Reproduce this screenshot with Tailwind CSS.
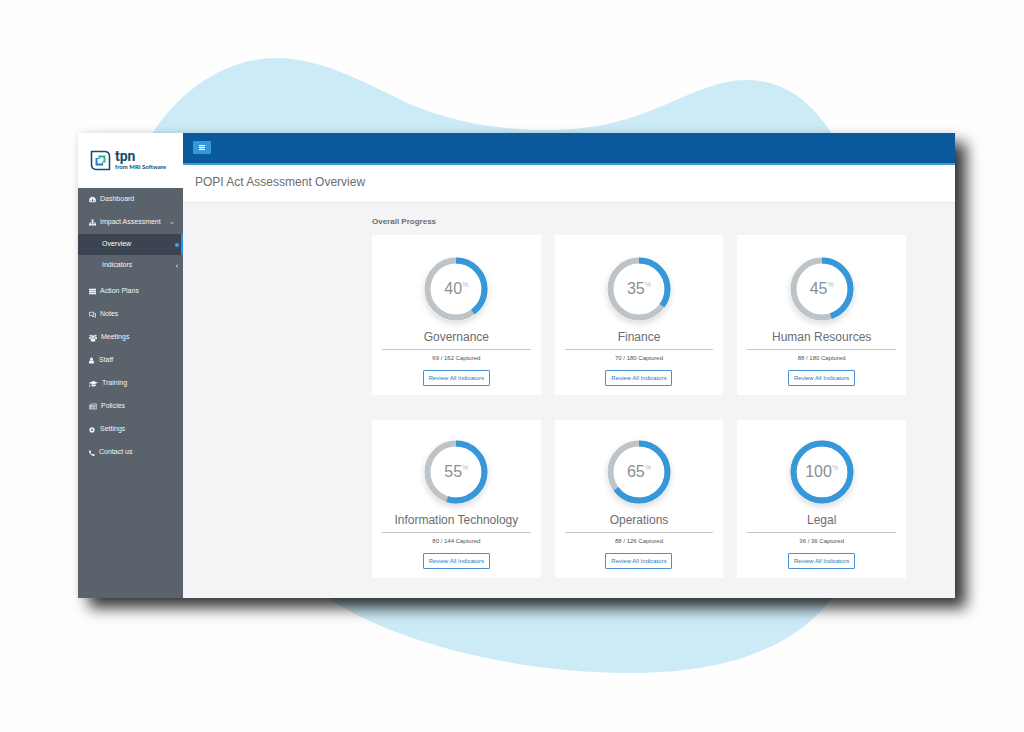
<!DOCTYPE html>
<html lang="en">
<head>
<meta charset="utf-8">
<meta name="viewport" content="width=device-width, initial-scale=1">
<title>POPI Act Assessment Overview</title>
<script src="https://cdn.jsdelivr.net/npm/@tailwindcss/browser@4"></script>
</head>
<body class="relative min-h-screen bg-[#fefefe] pt-[133px] pr-[69px] pb-[134px] pl-[78px] font-['Liberation_Sans',Arial,sans-serif] text-[#6a6d71]">

<!-- Decorative blob behind the window -->
<svg class="absolute inset-0 h-full w-full" viewBox="0 0 1024 732" preserveAspectRatio="none" aria-hidden="true">
  <path fill="#cdebf7" d="M151 135C180 90 225 58 276 58C325 58 370 86 410 104C455 123 500 130 550 130C650 130 690 80 747 80C790 80 815 108 833 135L860 560C855 580 845 590 831 599C800 640 740 673 630 673C500 673 380 635 327 597L200 500Z"/>
</svg>

<div class="relative flex bg-[#f4f4f6] shadow-[11px_10px_14px_rgba(0,0,0,0.78),0_0_8px_rgba(0,0,0,0.08)]">

  <aside class="flex w-[105px] shrink-0 flex-col bg-[#5a626c]">
    <a href="#" class="flex h-[55px] items-center gap-[4px] bg-white pl-[12px] text-[#12506b]" aria-label="tpn from MRI Software">
      <svg class="h-[21px] w-[21px] shrink-0" viewBox="0 0 21 21" fill="none" aria-hidden="true">
        <path d="M1.500 1.500H14.500Q19.500 1.500 19.500 6.500V19.500H6.500Q1.500 19.500 1.500 14.500Z" stroke="#14506a" stroke-width="1.600" stroke-linejoin="round"/>
        <path d="M9 6.500H14.500V12" stroke="#1fb58c" stroke-width="1.900"/>
        <path d="M6.500 8.500V14.500H12.500" stroke="#1c7fd0" stroke-width="1.900"/>
        <path d="M9 5.600V9M12 12H15.400" stroke="#1fb58c" stroke-width="1.200"/>
        <path d="M5.600 8.500H8.500M12.500 15.400V12.800" stroke="#1c7fd0" stroke-width="1.200"/>
      </svg>
      <span class="flex flex-col">
        <span class="font-[Roboto,sans-serif] text-[14px] leading-[11px] font-bold">tpn</span>
        <span class="font-[Lato,sans-serif] text-[6px] leading-[9px] font-bold whitespace-nowrap">from MRI Software</span>
      </span>
    </a>

    <nav class="text-[7px] text-[#f4f5f6]" aria-label="Main">
      <ul>
        <li><a href="#" class="flex h-[23px] items-center gap-[4px] pl-[11px]">
          <svg class="h-[7px] w-[7px]" viewBox="0 0 14 14" fill="currentColor" aria-hidden="true"><path fill-rule="evenodd" d="M7 1.500A7 7 0 0 0 1.500 12.500H12.500A7 7 0 0 0 7 1.500ZM6.300 5H7.700V8.500A1.500 1.500 0 1 1 6.300 8.500ZM2 8H3.500V9.500H2ZM10.500 8H12V9.500H10.500Z"/></svg>
          Dashboard</a></li>
        <li><a href="#" class="flex h-[23px] items-center gap-[4px] pr-[9px] pl-[11px]">
          <svg class="h-[7px] w-[7px]" viewBox="0 0 14 14" fill="currentColor" aria-hidden="true"><path d="M5 1H9V5H7.700V6.500H12.500V9H14V13H9.500V9H11.300V7.700H7.700V9H9V13H5V9H6.300V7.700H2.700V9H4.500V13H0V9H1.500V6.500H6.300V5H5Z"/></svg>
          <span class="flex-1 whitespace-nowrap">Impact Assessment</span>
          <svg class="h-[4px] w-[4px]" viewBox="0 0 8 8" fill="none" stroke="currentColor" stroke-width="1.600" aria-hidden="true"><path d="M1 2.500L4 5.500L7 2.500"/></svg>
        </a>
          <ul class="mb-[4px]">
            <li><a href="#" aria-current="page" class="flex h-[21px] items-center justify-between border-r-2 border-[#2f8fdc] bg-[#3c4452] pr-[2px] pl-[24px] text-white">Overview
              <svg class="h-[4px] w-[4px]" viewBox="0 0 4 4" fill="#3ba3ec" aria-hidden="true"><circle cx="2" cy="2" r="2"/></svg></a></li>
            <li><a href="#" class="flex h-[21px] items-center justify-between pr-[4px] pl-[24px]">Indicators
              <svg class="h-[4px] w-[4px]" viewBox="0 0 8 8" fill="none" stroke="currentColor" stroke-width="1.600" aria-hidden="true"><path d="M5.500 1L2.500 4L5.500 7"/></svg></a></li>
          </ul>
        </li>
        <li><a href="#" class="flex h-[23px] items-center gap-[4px] pl-[11px]">
          <svg class="h-[7px] w-[7px]" viewBox="0 0 14 14" fill="currentColor" aria-hidden="true"><path d="M0 1.500H14V4.500H0ZM0 5.500H14V8.500H0ZM0 9.500H14V12.500H0Z"/></svg>
          Action Plans</a></li>
        <li><a href="#" class="flex h-[23px] items-center gap-[4px] pl-[11px]">
          <svg class="h-[7px] w-[7px]" viewBox="0 0 14 14" fill="none" stroke="currentColor" stroke-width="1.500" aria-hidden="true"><path d="M1 2.500H9.500V8.500H4L2 10.500V8.500H1ZM11 5H13V11H12.500V13L10.500 11H6"/></svg>
          Notes</a></li>
        <li><a href="#" class="flex h-[23px] items-center gap-[4px] pl-[11px]">
          <svg class="h-[8px] w-[8px]" viewBox="0 0 16 16" fill="currentColor" aria-hidden="true"><circle cx="3" cy="3.500" r="2.200"/><circle cx="13" cy="3.500" r="2.200"/><circle cx="8" cy="5.500" r="2.900"/><path d="M0 6.500H4.500Q4.500 8.500 6 9H3.500L3 10H0ZM16 6.500H11.500Q11.500 8.500 10 9H12.500L13 10H16ZM3.500 15V11Q3.500 9 6 9H10Q12.500 9 12.500 11V15Z"/></svg>
          Meetings</a></li>
        <li><a href="#" class="flex h-[23px] items-center gap-[5px] pl-[11px]">
          <svg class="h-[7px] w-[5px]" viewBox="0 0 10 14" fill="currentColor" aria-hidden="true"><circle cx="5" cy="4" r="3"/><path d="M0 13V9.500Q0 7 2.500 7H7.500Q10 7 10 9.500V13Z"/></svg>
          Staff</a></li>
        <li><a href="#" class="flex h-[23px] items-center gap-[4px] pl-[11px]">
          <svg class="h-[8px] w-[9px]" viewBox="0 0 18 16" fill="currentColor" aria-hidden="true"><path d="M9 2L18 5.500L9 9L2 6.300V11L2.800 14H0.500L1.200 11V6L0 5.500ZM4.500 8.400L9 10.200L13.500 8.400V11.500Q9 14.500 4.500 11.500Z"/></svg>
          Training</a></li>
        <li><a href="#" class="flex h-[23px] items-center gap-[4px] pl-[11px]">
          <svg class="h-[7px] w-[8px]" viewBox="0 0 16 14" fill="none" stroke="currentColor" stroke-width="1.300" aria-hidden="true"><path d="M3 2H15.300V12H2Q.7 12 .7 10.500V4H3V10.500Q3 12 2 12M5 4.500H8.500V8H5ZM10 4.500H13.500M10 7H13.500M5 10H13.500"/></svg>
          Policies</a></li>
        <li><a href="#" class="flex h-[23px] items-center gap-[5px] pl-[11px]">
          <svg class="h-[6px] w-[6px]" viewBox="0 0 14 14" fill="none" stroke="currentColor" aria-hidden="true"><circle cx="7" cy="7" r="3.800" stroke-width="3"/><path stroke-width="2.400" d="M7 0V3M7 11V14M0 7H3M11 7H14M2 2L4 4M10 10L12 12M12 2L10 4M4 10L2 12"/></svg>
          Settings</a></li>
        <li><a href="#" class="flex h-[23px] items-center gap-[4px] pl-[11px]">
          <svg class="h-[6px] w-[6px]" viewBox="0 0 12 12" fill="currentColor" aria-hidden="true"><path d="M0 2Q.500 .500 2.500 .300L4.300 3.500L3 5Q4.300 7.800 7 9L8.500 7.700L11.800 9.500Q11.500 11.500 10 12Q7 12.500 3.500 9Q-.500 5 0 2Z"/></svg>
          Contact us</a></li>
      </ul>
    </nav>
  </aside>

  <div class="min-w-0 flex-1">
    <div class="flex h-[32px] items-center border-b-2 border-[#3d9bdc] bg-[#09599c] pl-[10px]">
      <button type="button" aria-label="Toggle menu" class="mb-[2px] flex h-[13px] w-[18px] items-center justify-center rounded-[1px] bg-[#3498db] text-white">
        <svg class="h-[5px] w-[6px]" viewBox="0 0 6 5" fill="currentColor" aria-hidden="true"><path d="M0 0H6V1.200H0ZM0 1.900H6V3.100H0ZM0 3.800H6V5H0Z"/></svg>
      </button>
    </div>
    <header class="flex h-[38px] items-center border-b border-[#e9eaec] bg-white pb-[4px] pl-[12px]">
      <h1 class="text-[12px]">POPI Act Assessment Overview</h1>
    </header>

    <main class="pt-[14px] pr-[49px] pb-[20px] pl-[189px]">
      <h2 class="mb-[8px] text-[8px] leading-[10px] font-bold">Overall Progress</h2>
      <div id="cards" class="grid grid-cols-3 gap-x-[14px] gap-y-[25px]"></div>
    </main>
  </div>
</div>

<template id="card">
  <section class="flex flex-col items-center bg-white px-[10px] pb-[9px]">
    <div class="relative h-[64px] w-[64px] rounded-full shadow-[0_3px_6px_rgba(0,0,0,0.14)]">
      <svg class="h-full w-full -rotate-90" viewBox="0 0 64 64" fill="white" stroke-width="6" aria-hidden="true">
        <circle cx="32" cy="32" r="28.500" stroke="#bdc3c7"/>
        <circle data-arc cx="32" cy="32" r="28.500" stroke="#3498db" pathLength="100"/>
      </svg>
      <p class="absolute inset-0 flex items-center justify-center text-[16px] text-[#8b8f92]"><span data-value></span><span class="mb-[7px] text-[7px] text-[#b5b9bc]">%</span></p>
    </div>
    <h3 class="mt-[8px] text-[12px] leading-[16px]" data-name></h3>
    <hr class="mt-[4px] w-full border-[#c4c6c8]">
    <p class="mt-[4px] text-[6px] leading-[8px] text-[#4f5256]" data-captured></p>
    <button type="button" class="mt-[8px] h-[16px] w-[67px] rounded-[1px] border border-[#4a90d9] text-[6px] leading-[8px] whitespace-nowrap text-[#2a76c8]">Review All Indicators</button>
  </section>
</template>

<script>
  const areas = [
    ["Governance", 40, "69 / 162"],
    ["Finance", 35, "70 / 180"],
    ["Human Resources", 45, "88 / 180"],
    ["Information Technology", 55, "80 / 144"],
    ["Operations", 65, "88 / 126"],
    ["Legal", 100, "36 / 36"]
  ];
  const template = document.getElementById("card");
  areas.forEach(([name, percent, captured], i) => {
    const card = template.content.cloneNode(true);
    card.querySelector("section").classList.add(i < 3 ? "pt-[22px]" : "pt-[20px]");
    card.querySelector("[data-arc]").setAttribute("stroke-dasharray", percent + " " + (100 - percent));
    card.querySelector("[data-arc]").setAttribute("fill", "none");
    card.querySelector("[data-value]").textContent = percent;
    card.querySelector("[data-name]").textContent = name;
    card.querySelector("[data-captured]").textContent = captured + " Captured";
    document.getElementById("cards").append(card);
  });
</script>
</body>
</html>
